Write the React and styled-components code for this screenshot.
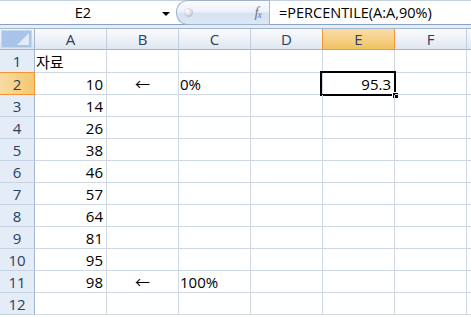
import React from "react";
import styled, { createGlobalStyle, css } from "styled-components";

const GlobalStyle = createGlobalStyle`
  html, body { margin: 0; padding: 0; background: #ffffff; }
  body { font-family: "Open Sans", "Noto Sans CJK KR", sans-serif; }
  * { box-sizing: border-box; }
`;

const FONT = `"Open Sans", "Noto Sans CJK KR", sans-serif`;

const Page = styled.div`
  width: 471px;
  height: 317px;
  overflow: hidden;
  background: #ffffff;
`;

const FormulaBar = styled.div`
  display: flex;
  height: 25px;
  border-top: 1px solid #c3d1e3;
  border-bottom: 1px solid #8aa2c0;
  background: #ffffff;
`;

const NameBox = styled.div`
  width: 176px;
  display: flex;
  align-items: center;
  font-family: ${FONT};
  font-size: 14.5px;
  color: #000;
  padding-right: 6px;
`;

const NameText = styled.span`
  flex: 1;
  text-align: center;
  padding-left: 4px;
`;

const DropArrow = styled.span`
  width: 0;
  height: 0;
  border-left: 4px solid transparent;
  border-right: 4px solid transparent;
  border-top: 4px solid #000;
  margin-top: 2px;
`;

const FxPill = styled.div`
  width: 94px;
  position: relative;
  display: flex;
  align-items: center;
  justify-content: space-between;
  padding: 0 8px 0 7px;
  margin-top: -1px;
  margin-bottom: -1px;
  border: 1px solid #9fb3cf;
  border-right: 1px solid #a7b9d2;
  border-radius: 12px 0 0 12px;
  background: linear-gradient(#fbfcfe 0%, #edf2fa 45%, #d6e2f2 55%, #dce7f5 100%);
`;

const Grip = styled.span`
  width: 9px;
  height: 9px;
  border-radius: 50%;
  background: radial-gradient(circle at 40% 35%, #ffffff 0%, #d8dde4 45%, #9aa4b0 100%);
`;

const FxLabel = styled.span`
  font-family: "Liberation Serif", "DejaVu Serif", serif;
  font-style: italic;
  color: #6c7a8c;
  font-size: 15px;
  letter-spacing: -1px;
  & small {
    font-size: 10px;
    vertical-align: -1px;
  }
`;

const FormulaInput = styled.div`
  flex: 1;
  display: flex;
  align-items: center;
  padding-left: 9px;
  font-family: ${FONT};
  font-size: 14.5px;
  color: #000;
  white-space: nowrap;
`;

const Strip = styled.div`
  height: 4px;
  background: #e6edf7;
  border-bottom: 1px solid #9eb6ce;
`;

const Sheet = styled.div`
  display: grid;
  grid-template-columns: 35px repeat(6, 72px) 1fr;
  grid-template-rows: 21px 23px;
  grid-auto-rows: 22px;
  font-family: ${FONT};
  font-size: 15px;
`;

const Corner = styled.div`
  position: relative;
  border-right: 1px solid #9eb6ce;
  border-bottom: 1px solid #9eb6ce;
  background: linear-gradient(#f6f9fd, #dbe4f0);
  padding: 1px 2px 1px 1px;
`;

const CornerInner = styled.div`
  width: 100%;
  height: 100%;
  background: #a9c4e9;
  border: 1px solid #c6d8f0;
  position: relative;
  overflow: hidden;
  &::after {
    content: "";
    position: absolute;
    right: 2px;
    bottom: 2px;
    width: 0;
    height: 0;
    border-left: 12px solid transparent;
    border-bottom: 12px solid #e3ebf6;
  }
`;

const ColHead = styled.div`
  display: flex;
  align-items: center;
  justify-content: center;
  color: #27415f;
  border-right: 1px solid #c2cfdf;
  border-bottom: 1px solid #9eb6ce;
  background: linear-gradient(#f9fbfd 0%, #eef2f8 50%, #dfe6f0 100%);
  ${(p) =>
    p.$active &&
    css`
      background: linear-gradient(#f9dca5 0%, #f6d08a 50%, #f1c160 100%);
      border-right: 1px solid #f29536;
      border-bottom: 1px solid #f29536;
      box-shadow: -1px 0 0 #f29536;
    `}
`;

const RowHead = styled.div`
  display: flex;
  align-items: center;
  justify-content: center;
  color: #27415f;
  border-right: 1px solid #9eb6ce;
  border-bottom: 1px solid #c5d3e3;
  background: #e4ecf7;
  ${(p) =>
    p.$active &&
    css`
      background: linear-gradient(90deg, #f9dba2, #f3c86f);
      border-right: 1px solid #f29536;
      border-bottom: 1px solid #f29536;
      box-shadow: 0 -1px 0 #f29536;
    `}
`;

const Cell = styled.div`
  position: relative;
  display: flex;
  align-items: center;
  padding: 0 3px 0 1px;
  color: #000;
  white-space: nowrap;
  border-right: 1px solid #d0d7e5;
  border-bottom: 1px solid #d0d7e5;
  justify-content: ${(p) =>
    p.$align === "right" ? "flex-end" : p.$align === "center" ? "center" : "flex-start"};
  ${(p) => p.$align === "center" && css`padding: 0 1px;`}
`;

const Selection = styled.div`
  position: absolute;
  left: -3px;
  top: -2px;
  right: -2px;
  bottom: -2px;
  border: 2px solid #000;
  pointer-events: none;
`;

const FillHandle = styled.div`
  position: absolute;
  right: -5px;
  bottom: -5px;
  width: 7px;
  height: 7px;
  background: #000;
  border: 1px solid #fff;
`;

const cols = ["A", "B", "C", "D", "E", "F", ""];

const data = {
  1: { A: { v: "자료", align: "left" } },
  2: {
    A: { v: "10", align: "right" },
    B: { v: "←", align: "center" },
    C: { v: "0%", align: "left" },
    E: { v: "95.3", align: "right", selected: true },
  },
  3: { A: { v: "14", align: "right" } },
  4: { A: { v: "26", align: "right" } },
  5: { A: { v: "38", align: "right" } },
  6: { A: { v: "46", align: "right" } },
  7: { A: { v: "57", align: "right" } },
  8: { A: { v: "64", align: "right" } },
  9: { A: { v: "81", align: "right" } },
  10: { A: { v: "95", align: "right" } },
  11: {
    A: { v: "98", align: "right" },
    B: { v: "←", align: "center" },
    C: { v: "100%", align: "left" },
  },
  12: {},
};

export default function App() {
  const rows = Array.from({ length: 12 }, (_, i) => i + 1);
  return (
    <Page>
      <GlobalStyle />
      <FormulaBar>
        <NameBox>
          <NameText>E2</NameText>
          <DropArrow />
        </NameBox>
        <FxPill>
          <Grip />
          <FxLabel>
            f<small>x</small>
          </FxLabel>
        </FxPill>
        <FormulaInput>=PERCENTILE(A:A,90%)</FormulaInput>
      </FormulaBar>
      <Strip />
      <Sheet>
        <Corner>
          <CornerInner />
        </Corner>
        {cols.map((c, i) => (
          <ColHead key={"h" + i} $active={c === "E"}>
            {c}
          </ColHead>
        ))}
        {rows.map((r) => (
          <React.Fragment key={r}>
            <RowHead $active={r === 2}>{r}</RowHead>
            {cols.map((c, i) => {
              const d = (data[r] || {})[c];
              return (
                <Cell key={r + "-" + i} $align={d ? d.align : "left"}>
                  {d ? d.v : ""}
                  {d && d.selected && (
                    <Selection>
                      <FillHandle />
                    </Selection>
                  )}
                </Cell>
              );
            })}
          </React.Fragment>
        ))}
      </Sheet>
    </Page>
  );
}
